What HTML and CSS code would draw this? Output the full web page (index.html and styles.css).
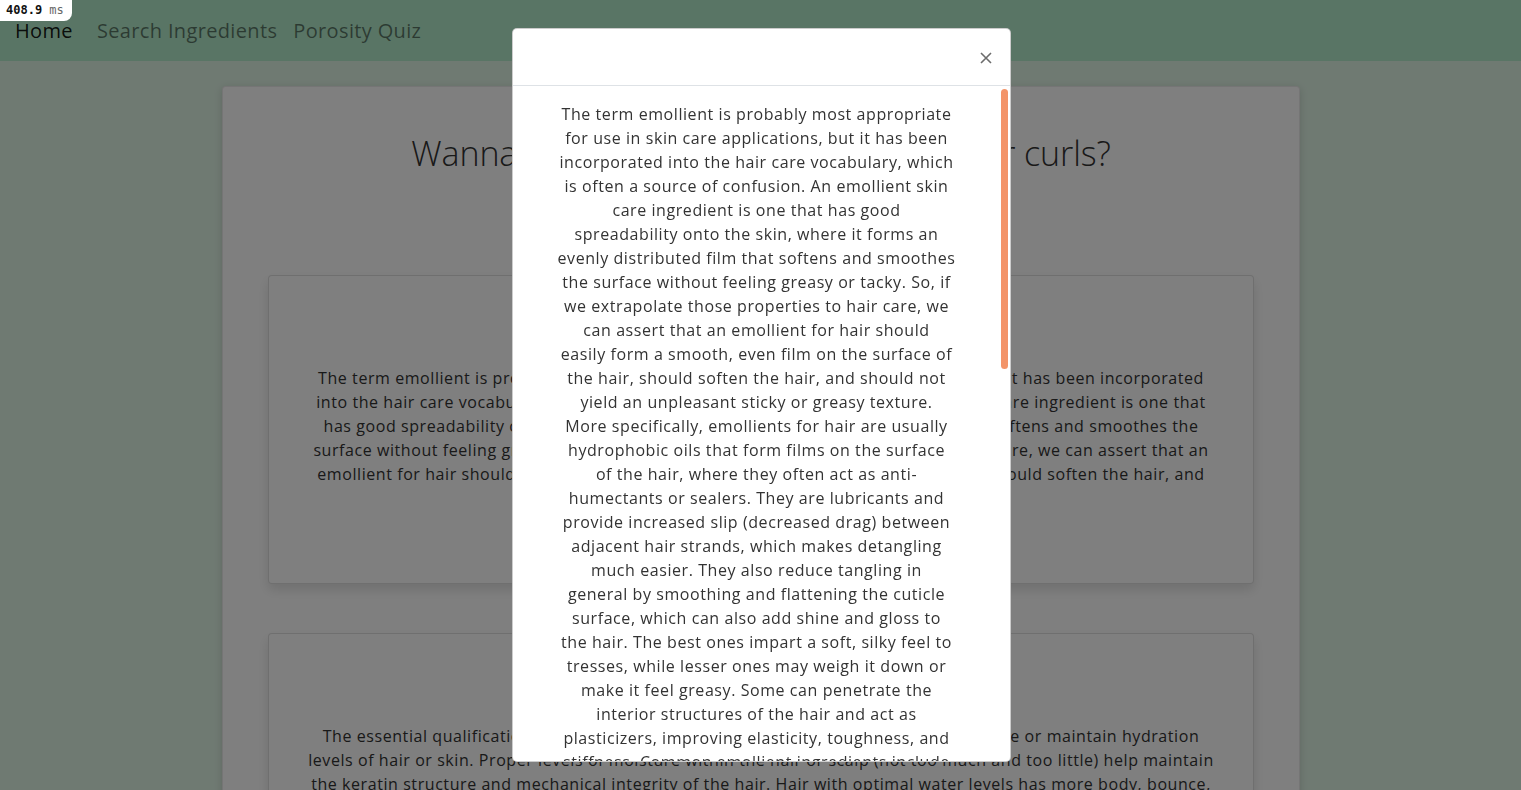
FILE: index.html
```html
<!DOCTYPE html>
<html lang="en">
<head>
<meta charset="utf-8">
<title>Curls</title>
<link rel="stylesheet" href="styles.css">
</head>
<body>
<div class="timer">408.9 <span class="unit">ms</span></div>
<nav class="navbar">
  <a class="brand" href="#">Home</a>
  <a class="nav-link" href="#">Search Ingredients</a>
  <a class="nav-link" href="#">Porosity Quiz</a>
</nav>
<main class="container">
  <h1 class="title">Wanna know what's really good for your curls?</h1>
  <section class="card">
    <p class="card-text">The term emollient is probably most appropriate for use in skin care applications, but it has been incorporated<br>into the hair care vocabulary, which is often a source of confusion. An emollient skin care ingredient is one that<br>has good spreadability onto the skin, where it forms an evenly distributed film that softens and smoothes the<br>surface without feeling greasy or tacky. So, if we extrapolate those properties to hair care, we can assert that an<br>emollient for hair should easily form a smooth, even film on the surface of the hair, should soften the hair, and</p>
  </section>
  <section class="card">
    <p class="card-text">The essential qualification of a humectant is that it is able to attract water and increase or maintain hydration<br>levels of hair or skin. Proper levels of moisture within the hair or scalp (not too much and too little) help maintain<br>the keratin structure and mechanical integrity of the hair. Hair with optimal water levels has more body, bounce,<br>shine and elasticity, and is less prone to frizz, breakage and split ends than hair that is too dry or too wet.</p>
  </section>
</main>
<div class="backdrop"></div>
<div class="modal-wrap">
  <div class="modal">
    <div class="modal-header">
      <button class="close" aria-label="Close">
        <svg width="12" height="12" viewBox="0 0 12 12"><path d="M1 1L11 11M11 1L1 11" stroke="#6c6c6c" stroke-width="1.6" fill="none"/></svg>
      </button>
    </div>
    <div class="modal-body">
      <p class="modal-text">The term emollient is probably most appropriate<br>for use in skin care applications, but it has been<br>incorporated into the hair care vocabulary, which<br>is often a source of confusion. An emollient skin<br>care ingredient is one that has good<br>spreadability onto the skin, where it forms an<br>evenly distributed film that softens and smoothes<br>the surface without feeling greasy or tacky. So, if<br>we extrapolate those properties to hair care, we<br>can assert that an emollient for hair should<br>easily form a smooth, even film on the surface of<br>the hair, should soften the hair, and should not<br>yield an unpleasant sticky or greasy texture.<br>More specifically, emollients for hair are usually<br>hydrophobic oils that form films on the surface<br>of the hair, where they often act as anti-<br>humectants or sealers. They are lubricants and<br>provide increased slip (decreased drag) between<br>adjacent hair strands, which makes detangling<br>much easier. They also reduce tangling in<br>general by smoothing and flattening the cuticle<br>surface, which can also add shine and gloss to<br>the hair. The best ones impart a soft, silky feel to<br>tresses, while lesser ones may weigh it down or<br>make it feel greasy. Some can penetrate the<br>interior structures of the hair and act as<br>plasticizers, improving elasticity, toughness, and<br>stiffness. Common emollient ingredients include<br>plant oils, butters and silicones.</p>
      <div class="scroll-thumb"></div>
    </div>
  </div>
</div>
</body>
</html>
```
FILE: styles.css
```css
* { box-sizing: border-box; }
html, body { height: 100%; }
body {
  margin: 0;
  background: #dff4e5;
  font-family: "Open Sans", "DejaVu Sans", sans-serif;
  color: #333;
  overflow: hidden;
}
.timer {
  position: absolute;
  top: 0;
  left: 0;
  z-index: 100;
  background: #fff;
  color: #111;
  font-family: "DejaVu Sans Mono", monospace;
  font-weight: bold;
  font-size: 12px;
  line-height: 21px;
  padding: 0 8px 0 6px;
  border-bottom-right-radius: 8px;
}
.timer .unit { font-weight: normal; color: #666; }
.navbar {
  height: 61px;
  background: #b2eaca;
  display: flex;
  align-items: center;
  padding: 0 15px 1px;
}
.navbar a {
  text-decoration: none;
  font-size: 20px;
  letter-spacing: 0.35px;
}
.brand { color: rgba(0,0,0,.9); margin-right: 16px; letter-spacing: 0.3px; }
.nav-link { color: rgba(0,0,0,.5); padding: 0 8px; }
.container {
  width: 1078px;
  margin: 25px 0 0 222px;
  background: #fff;
  border: 1px solid rgba(0,0,0,.08);
  border-radius: 4px;
  box-shadow: 0 2px 8px rgba(0,0,0,.15);
  padding: 46px 45px 40px;
  height: 800px;
}
.title {
  margin: 0 0 102px;
  font-size: 34px;
  line-height: 40px;
  font-weight: 300;
  text-align: center;
  color: #333;
  letter-spacing: -0.1px;
}
.card {
  border: 1px solid rgba(0,0,0,.125);
  border-radius: 4px;
  box-shadow: 0 6px 12px rgba(0,0,0,.12);
  padding: 90px 20px 97px;
  margin-bottom: 49px;
  background: #fff;
}
.card-text {
  margin: 0;
  text-align: center;
  font-size: 16px;
  line-height: 24px;
  white-space: nowrap;
  letter-spacing: 0.57px;
  color: #333;
}
.backdrop {
  position: fixed;
  inset: 0;
  background: rgba(0,0,0,.5);
  z-index: 10;
}
.modal-wrap {
  position: fixed;
  inset: 0;
  z-index: 20;
  display: flex;
  justify-content: center;
  padding: 28px 0 28px 2px;
}
.modal {
  width: 499px;
  height: 734px;
  background: #fff;
  border: 1px solid rgba(0,0,0,.2);
  border-radius: 5px;
  display: flex;
  flex-direction: column;
  overflow: hidden;
}
.modal-header {
  height: 57px;
  flex: none;
  border-bottom: 1px solid #dee2e6;
  display: flex;
  justify-content: flex-end;
  align-items: center;
  padding: 1px 18px 0 0;
}
.close {
  border: 0;
  background: none;
  padding: 0;
  width: 12px;
  height: 12px;
  display: flex;
}
.modal-body {
  position: relative;
  flex: 1;
  overflow: hidden;
  padding: 16px 10px 0 0;
}
.modal-text {
  margin: 0;
  text-align: center;
  font-size: 16px;
  line-height: 24px;
  white-space: nowrap;
  letter-spacing: 0.57px;
  color: #333;
}
.scroll-thumb {
  position: absolute;
  top: 3px;
  right: 2px;
  width: 7px;
  height: 280px;
  background: #f39469;
  border-radius: 4px;
}
```
